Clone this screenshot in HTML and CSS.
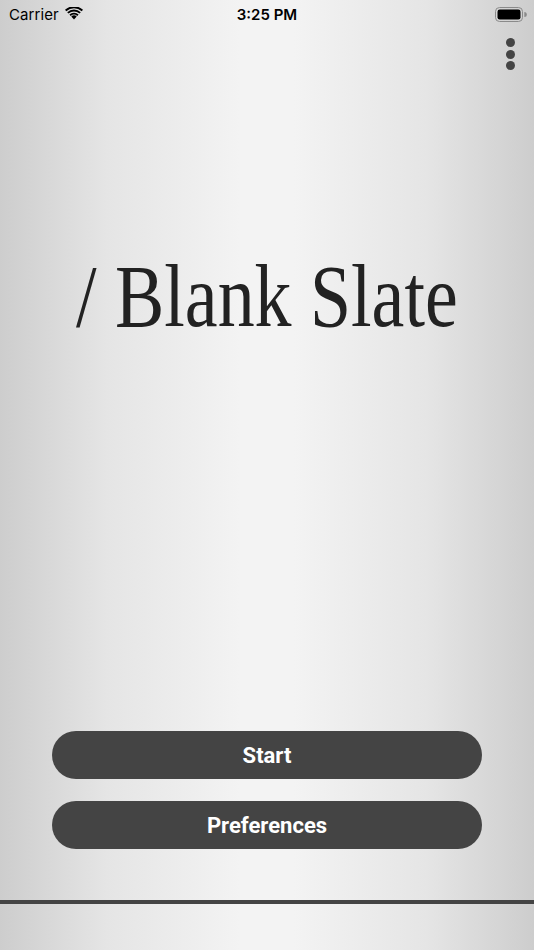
FILE: index.html
```html
<!DOCTYPE html>
<html>
<head>
<meta charset="utf-8">
<link rel="stylesheet" href="styles.css">
</head>
<body>
<div class="screen">
  <div class="statusbar">
    <div class="sb-left">
      <span class="carrier">Carrier</span>
      <svg class="wifi" width="18" height="13" viewBox="0 0 18 13">
        <path d="M9 12.6 L6.3 9.6 A4 4 0 0 1 11.7 9.6 Z" fill="#000"/>
        <path d="M4.4 7.6 A6.8 6.8 0 0 1 13.6 7.6 L12.3 9.0 A5 5 0 0 0 5.7 9.0 Z" fill="#000"/>
        <path d="M2.2 5.2 A10 10 0 0 1 15.8 5.2 L14.5 6.6 A8.1 8.1 0 0 0 3.5 6.6 Z" fill="#000"/>
        <path d="M0 2.8 A13.2 13.2 0 0 1 18 2.8 L16.7 4.2 A11.3 11.3 0 0 0 1.3 4.2 Z" fill="#000"/>
      </svg>
    </div>
    <div class="time">3:25 PM</div>
    <div class="sb-right">
      <svg width="32" height="15" viewBox="0 0 32 15">
        <rect x="0.5" y="0.5" width="27" height="14" rx="4" fill="none" stroke="#8a8a8a" stroke-width="1"/>
        <rect x="2.5" y="2.5" width="23" height="10" rx="2.2" fill="#000"/>
        <path d="M29.3 5 A2.2 2.2 0 0 1 29.3 10 Z" fill="#8a8a8a"/>
      </svg>
    </div>
  </div>
  <div class="toolbar">
    <div class="more">
      <span class="dot"></span><span class="dot"></span><span class="dot"></span>
    </div>
  </div>
  <div class="hero">
    <h1 class="title">/ Blank Slate</h1>
  </div>
  <div class="actions">
    <button class="btn">Start</button>
    <button class="btn">Preferences</button>
  </div>
  <div class="divider"></div>
  <div class="footer"></div>
</div>
</body>
</html>
```
FILE: styles.css
```css
* { box-sizing: border-box; }
html, body { margin: 0; padding: 0; }
body {
  width: 534px;
  height: 950px;
  overflow: hidden;
  font-family: "Inter", "Roboto", "Liberation Sans", sans-serif;
}
.screen {
  width: 534px;
  height: 950px;
  display: flex;
  flex-direction: column;
  background: linear-gradient(to right, #cdcdcd 0%, #e5e5e5 20%, #f3f3f3 45%, #f3f3f3 55%, #e5e5e5 80%, #cdcdcd 100%);
}
.statusbar {
  height: 28px;
  flex: none;
  display: flex;
  align-items: center;
  justify-content: space-between;
  padding: 0 7px 0 9px;
  position: relative;
}
.sb-left { display: flex; align-items: center; gap: 6px; }
.carrier { font-size: 15px; color: #000; letter-spacing: 0.1px; }
.wifi { margin-top: -2px; }
.time {
  position: absolute;
  left: 0; right: 0;
  text-align: center;
  font-size: 15px;
  font-weight: 600;
  color: #000;
  pointer-events: none;
}
.sb-right { display: flex; align-items: center; }
.toolbar {
  flex: none;
  height: 42px;
  display: flex;
  justify-content: flex-end;
  padding: 10px 19px 0 0;
}
.more {
  display: flex;
  flex-direction: column;
  gap: 2.5px;
}
.dot {
  width: 9px;
  height: 9px;
  border-radius: 50%;
  background: #444;
}
.hero {
  flex: 1;
  display: flex;
  justify-content: center;
  align-items: flex-start;
  padding-top: 182px;
}
.title {
  margin: 0;
  font-family: "Liberation Serif", "DejaVu Serif", serif;
  font-weight: 400;
  font-size: 89px;
  line-height: 1;
  color: #222;
  white-space: nowrap;
  transform: scaleX(0.83);
}
.actions {
  flex: none;
  display: flex;
  flex-direction: column;
  gap: 22px;
  padding: 0 52px;
}
.btn {
  height: 48px;
  border: none;
  border-radius: 24px;
  background: #444;
  color: #fff;
  font-family: "Roboto", "Liberation Sans", sans-serif;
  font-weight: 700;
  font-size: 22px;
  padding: 0;
  cursor: pointer;
}
.divider {
  flex: none;
  margin-top: 51px;
  height: 4px;
  background: #444;
}
.footer { flex: none; height: 46px; }
```
